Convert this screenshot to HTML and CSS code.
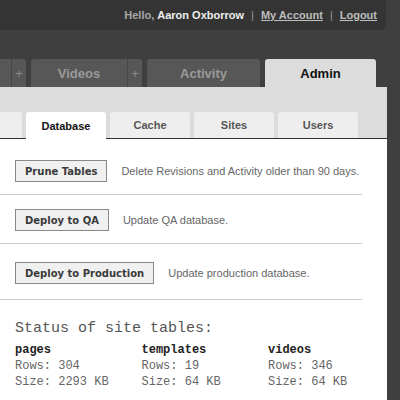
FILE: index.html
```html
<!DOCTYPE html>
<html>
<head>
<meta charset="utf-8">
<link rel="stylesheet" href="styles.css">
</head>
<body>
<div class="topbar">
  <span class="hello">Hello, <b class="name">Aaron Oxborrow</b></span>
  <span class="sep">|</span>
  <a class="toplink">My Account</a>
  <span class="sep">|</span>
  <a class="toplink">Logout</a>
</div>
<div class="tabs">
  <div class="tab"><span class="tab-label"></span><span class="tab-plus">+</span></div>
  <div class="tab"><span class="tab-label">Videos</span><span class="tab-plus">+</span></div>
  <div class="tab tab-wide"><span class="tab-label">Activity</span></div>
  <div class="tab tab-active"><span class="tab-label">Admin</span></div>
</div>
<div class="panel">
  <div class="subtabs">
    <div class="subtab"></div>
    <div class="subtab subtab-active">Database</div>
    <div class="subtab">Cache</div>
    <div class="subtab">Sites</div>
    <div class="subtab">Users</div>
  </div>
  <div class="content">
    <div class="row row-1">
      <button class="btn">Prune Tables</button>
      <span class="desc">Delete Revisions and Activity older than 90 days.</span>
    </div>
    <div class="row row-2">
      <button class="btn">Deploy to QA</button>
      <span class="desc">Update QA database.</span>
    </div>
    <div class="row row-3">
      <button class="btn">Deploy to Production</button>
      <span class="desc">Update production database.</span>
    </div>
    <div class="status">
      <h2 class="status-title">Status of site tables:</h2>
      <div class="status-grid">
        <div class="col">
          <div class="col-name">pages</div>
          <div>Rows: 304</div>
          <div>Size: 2293 KB</div>
        </div>
        <div class="col">
          <div class="col-name">templates</div>
          <div>Rows: 19</div>
          <div>Size: 64 KB</div>
        </div>
        <div class="col">
          <div class="col-name">videos</div>
          <div>Rows: 346</div>
          <div>Size: 64 KB</div>
        </div>
      </div>
    </div>
  </div>
</div>
</body>
</html>
```
FILE: styles.css
```css
html, body {
  margin: 0;
  padding: 0;
  background: #3f3f3f;
  overflow: hidden;
  font-family: "Liberation Sans", Arial, sans-serif;
}

.topbar {
  height: 30px;
  margin-right: 14px;
  background: #343434;
  border-bottom-right-radius: 5px;
  display: flex;
  justify-content: flex-end;
  align-items: center;
  padding-right: 9px;
  font-size: 11px;
  font-weight: bold;
  color: #a8a8a8;
}
.name { color: #eeeeee; }
.sep { color: #999; margin: 0 7px; font-weight: normal; }
.toplink { color: #bdbdbd; text-decoration: underline; }

.tabs {
  margin-top: 29px;
  height: 28px;
  display: flex;
  gap: 5px;
  margin-left: -85px;
}
.tab {
  width: 111px;
  display: flex;
  background: #575757;
  border-radius: 3px 3px 0 0;
  color: #9a9a9a;
  font-size: 13px;
  font-weight: bold;
}
.tab-wide { width: 113px; }
.tab-label {
  flex: 1;
  display: flex;
  align-items: center;
  justify-content: center;
}
.tab-plus {
  width: 14px;
  border-left: 1px solid #464646;
  display: flex;
  align-items: center;
  justify-content: center;
  font-weight: normal;
  font-size: 13px;
  color: #8a8a8a;
}
.tab-active {
  background: #dcdcdc;
  color: #111;
}

.panel {
  width: 387px;
  background: #dcdcdc;
  height: 400px;
}
.subtabs {
  padding-top: 25px;
  display: flex;
  gap: 4px;
  margin-left: -58px;
  border-bottom: 1px solid #333;
  height: 26px;
}
.subtab {
  width: 80px;
  height: 26px;
  background: #eeeeee;
  border-radius: 3px 3px 0 0;
  display: flex;
  align-items: center;
  justify-content: center;
  font-size: 11px;
  font-weight: bold;
  color: #555;
}
.subtab-active {
  background: #fff;
  color: #111;
  height: 27px;
}

.content {
  background: #fff;
  padding-right: 25px;
  height: 300px;
}
.row {
  display: flex;
  align-items: center;
  gap: 14px;
  padding-left: 15px;
  border-bottom: 1px solid #cccccc;
}
.row-1 { padding-top: 21px; padding-bottom: 12px; }
.row-2 { padding-top: 14px; padding-bottom: 12px; }
.row-3 { padding-top: 18px; padding-bottom: 15px; }
.btn {
  height: 22px;
  padding: 0 9px;
  border: 1px solid #888;
  background: #f0f0f0;
  font-family: "DejaVu Sans", Verdana, sans-serif;
  font-size: 10px;
  font-weight: bold;
  color: #3a3a3a;
  border-radius: 0;
}
.desc {
  font-size: 11px;
  color: #666;
}

.status {
  padding: 0 0 0 15px;
  font-family: "Liberation Mono", "Courier New", monospace;
  color: #666;
}
.status-title {
  margin: 20px 0 4px;
  font-size: 15px;
  font-weight: normal;
  line-height: 18px;
  color: #555;
}
.status-grid {
  display: grid;
  grid-template-columns: 126.5px 126.5px 126.5px;
  font-size: 12px;
  line-height: 16px;
}
.col-name {
  font-weight: bold;
  color: #222;
}
```
